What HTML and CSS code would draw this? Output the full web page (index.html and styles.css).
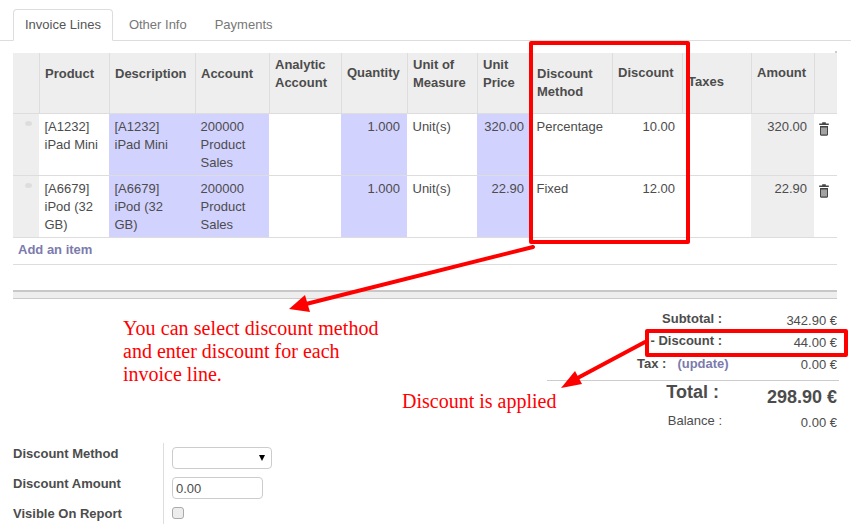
FILE: index.html
```html
<!DOCTYPE html>
<html lang="en">
<head>
<meta charset="utf-8">
<title>Invoice Lines</title>
<link rel="stylesheet" href="styles.css">
</head>
<body>
<div class="page">
  <nav class="tabs">
    <a class="tab active">Invoice Lines</a>
    <a class="tab">Other Info</a>
    <a class="tab">Payments</a>
  </nav>

  <main class="content">
    <table class="lines">
      <colgroup>
        <col class="c-handle"><col class="c-product"><col class="c-desc"><col class="c-account"><col class="c-analytic"><col class="c-qty"><col class="c-uom"><col class="c-price"><col class="c-method"><col class="c-discount"><col class="c-taxes"><col class="c-amount"><col class="c-del">
      </colgroup>
      <thead>
        <tr>
          <th></th>
          <th>Product</th>
          <th>Description</th>
          <th>Account</th>
          <th>Analytic Account</th>
          <th class="raised">Quantity</th>
          <th>Unit of Measure</th>
          <th>Unit Price</th>
          <th class="method">Discount Method</th>
          <th class="raised">Discount</th>
          <th class="taxes">Taxes</th>
          <th class="raised">Amount</th>
          <th></th>
        </tr>
      </thead>
      <tbody>
        <tr>
          <td class="handle"><span class="dot"></span></td>
          <td>[A1232] iPad Mini</td>
          <td class="req">[A1232] iPad Mini</td>
          <td class="req">200000 Product Sales</td>
          <td></td>
          <td class="req num">1.000</td>
          <td>Unit(s)</td>
          <td class="req num">320.00</td>
          <td>Percentage</td>
          <td class="num">10.00</td>
          <td></td>
          <td class="total num">320.00</td>
          <td class="del"><svg class="trash" viewBox="0 0 10 14"><path d="M3.2 1.5V.3h3.6v1.2h3v1.6H.2V1.5z"/><path fill-rule="evenodd" d="M1 4h8v8.6c0 .7-.5 1.2-1.2 1.2H2.2c-.7 0-1.2-.5-1.2-1.2zM2.5 5.4v7h1v-7zm2 0v7h1v-7zm2 0v7h1v-7z"/></svg></td>
        </tr>
        <tr>
          <td class="handle"><span class="dot"></span></td>
          <td>[A6679] iPod (32 GB)</td>
          <td class="req">[A6679] iPod (32 GB)</td>
          <td class="req">200000 Product Sales</td>
          <td></td>
          <td class="req num">1.000</td>
          <td>Unit(s)</td>
          <td class="req num">22.90</td>
          <td>Fixed</td>
          <td class="num">12.00</td>
          <td></td>
          <td class="total num">22.90</td>
          <td class="del"><svg class="trash" viewBox="0 0 10 14"><path d="M3.2 1.5V.3h3.6v1.2h3v1.6H.2V1.5z"/><path fill-rule="evenodd" d="M1 4h8v8.6c0 .7-.5 1.2-1.2 1.2H2.2c-.7 0-1.2-.5-1.2-1.2zM2.5 5.4v7h1v-7zm2 0v7h1v-7zm2 0v7h1v-7z"/></svg></td>
        </tr>
      </tbody>
    </table>
    <div class="add-row"><a class="link">Add an item</a></div>
    <div class="separator"></div>

    <section class="totals">
      <div class="t-row"><span class="t-label strong">Subtotal :</span><span class="t-value">342.90 €</span></div>
      <div class="t-row"><span class="t-label strong">- Discount :</span><span class="t-value">44.00 €</span></div>
      <div class="t-row tax"><span class="t-label strong">Tax :<a class="link update">(update)</a></span><span class="t-value">0.00 €</span></div>
      <div class="t-row grand"><span class="t-label">Total :</span><span class="t-value">298.90 €</span></div>
      <div class="t-row"><span class="t-label">Balance :</span><span class="t-value">0.00 €</span></div>
    </section>

    <form class="extra">
      <label class="f-label" for="dm">Discount Method</label>
      <div class="f-field"><div class="select-wrap"><select id="dm" class="f-select"><option></option></select></div></div>
      <label class="f-label" for="da">Discount Amount</label>
      <div class="f-field"><input id="da" class="f-input" type="text" value="0.00"></div>
      <label class="f-label" for="vr">Visible On Report</label>
      <div class="f-field"><input id="vr" class="f-check" type="checkbox"></div>
    </form>
  </main>

  <svg class="marks" width="851" height="524" viewBox="0 0 851 524">
    <rect class="speck" x="835" y="51" width="2" height="2"/>
    <rect class="box" x="531" y="43" width="157" height="199"/>
    <rect class="box" x="647" y="331" width="199" height="24"/>
    <line class="shaft" x1="533" y1="247" x2="302" y2="305"/>
    <polygon class="head" points="289,309 305,295 310,312"/>
    <line class="shaft" x1="645" y1="342" x2="572" y2="381"/>
    <polygon class="head" points="561,388 575,371 582,384"/>
  </svg>
  <p class="note note-a"><span class="wide">You can select discount method</span><br>and enter discount for each<br>invoice line.</p>
  <p class="note note-b">Discount is applied</p>
</div>
</body>
</html>
```

FILE: styles.css
```css
* { box-sizing: border-box; }
html, body { margin: 0; padding: 0; background: #fff; }
body {
  font-family: "Liberation Sans", Arial, sans-serif;
  font-size: 13px;
  line-height: 18px;
  color: #4c4c4c;
}
.page { position: relative; width: 851px; height: 524px; overflow: hidden; }

.tabs {
  display: flex;
  height: 41px;
  padding: 9px 0 0 13px;
  border-bottom: 1px solid #ddd;
}
.tab {
  height: 32px;
  margin-right: 4px;
  padding: 6px 11px;
  color: #777;
  border: 1px solid transparent;
  border-radius: 4px 4px 0 0;
}
.tab.active {
  color: #555;
  background: #fff;
  border-color: #ddd #ddd #fff;
}

.content { padding: 12px 14px 0 13px; }

.lines { width: 824px; table-layout: fixed; border-collapse: separate; border-spacing: 0; }
.c-handle { width: 26px; } .c-product { width: 70px; } .c-desc { width: 86px; }
.c-account { width: 74px; } .c-analytic { width: 72px; } .c-qty { width: 66px; }
.c-uom { width: 70px; } .c-price { width: 54px; } .c-method { width: 81px; }
.c-discount { width: 70px; } .c-taxes { width: 69px; } .c-amount { width: 63px; }
.c-del { width: 23px; }

.lines th {
  height: 61px;
  padding: 0 5px 18px 5px;
  text-align: left;
  vertical-align: middle;
  font-weight: bold;
  background: #eee;
  border-left: 1px solid #ddd;
  border-bottom: 1px solid #ddd;
}
.lines th:first-child { border-left: 0; }
.lines th.raised { padding-bottom: 20px; }
.lines th.method { padding-bottom: 0; }
.lines th.taxes { padding-bottom: 2px; }

.lines td {
  height: 62px;
  padding: 4px 7px 3px 5.5px;
  vertical-align: top;
  border-bottom: 1px solid #ddd;
}
.lines td.num { text-align: right; }
.lines td.req { background: #d2d2ff; }
.lines td.total { background: #eee; }
.lines td.handle { background: #eee; padding: 7px 0 0 12px; }
.lines td.del { padding: 8px 0 0 5px; }
.dot { display: block; width: 7px; height: 5px; border-radius: 50%; background: #ddd; }
.trash { display: block; width: 10px; height: 14px; fill: #444; }

.add-row { height: 27px; padding: 3px 5px; border-bottom: 1px solid #ddd; }
.link { color: #7c7bad; font-weight: bold; }

.separator {
  height: 9px;
  margin-top: 25px;
  background: #eee;
  border-top: 2px solid #c8c8c8;
  border-bottom: 1px solid #ccc;
}

.totals { display: flex; flex-direction: column; margin-top: 11px; }
.t-row { display: flex; justify-content: flex-end; height: 22px; }
.t-label { flex: none; width: 175px; text-align: right; white-space: nowrap; }
.t-value { flex: none; width: 115px; text-align: right; padding-top: 2px; }
.strong { font-weight: bold; }
.tax {
  width: 292px;
  height: 27px;
  align-self: flex-end;
  margin-right: -2px;
  padding-right: 2px;
  border-bottom: 1px solid #ccc;
}
.tax .t-label { padding: 1px 0 0 90px; text-align: left; }
.update { margin-left: 11px; }
.grand { height: 31px; font-weight: bold; }
.grand .t-label { font-size: 18px; padding: 2px 3px 0 0; }
.grand .t-value { font-size: 18px; padding-top: 7px; }

.extra {
  display: grid;
  grid-template-columns: 150px 1fr;
  grid-auto-rows: 30px;
  margin-top: 9px;
}
.f-label { font-weight: bold; padding-top: 2px; }
.f-field { padding: 4px 0 0 8px; border-left: 1px solid #ddd; }
.select-wrap { position: relative; width: 100px; height: 22px; }
.select-wrap::after {
  content: "";
  position: absolute;
  left: 87px;
  top: 8px;
  border-style: solid;
  border-width: 6px 3px 0;
  border-color: #000 transparent transparent;
}
.f-select {
  display: block;
  appearance: none;
  width: 100px;
  height: 22px;
  background: #fff;
  border: 1px solid #ccc;
  border-radius: 4px;
  font: 13px "Liberation Sans", Arial, sans-serif;
}
.f-input {
  display: block;
  width: 91px;
  height: 22px;
  padding: 1px 3px;
  border: 1px solid #ccc;
  border-radius: 4px;
  color: #4c4c4c;
  font: 13px "Liberation Sans", Arial, sans-serif;
}
.f-check {
  display: block;
  appearance: none;
  width: 12px;
  height: 12px;
  margin: 0;
  background: #ededed;
  border: 1px solid #aaa;
  border-radius: 3px;
}

.marks { position: absolute; left: 0; top: 0; pointer-events: none; }
.box { fill: none; stroke: #f00; stroke-width: 4; stroke-linejoin: round; }
.shaft { stroke: #f00; stroke-width: 4; stroke-linecap: round; }
.head { fill: #f00; }
.speck { fill: #ccc; }

.note {
  position: absolute;
  margin: 0;
  font-family: "Liberation Serif", "Times New Roman", serif;
  font-size: 20px;
  line-height: 23px;
  color: #f00;
}
.note-a { left: 123px; top: 317px; }
.note-a .wide { letter-spacing: 0.07px; }
.note-b { left: 402px; top: 390px; }
```
